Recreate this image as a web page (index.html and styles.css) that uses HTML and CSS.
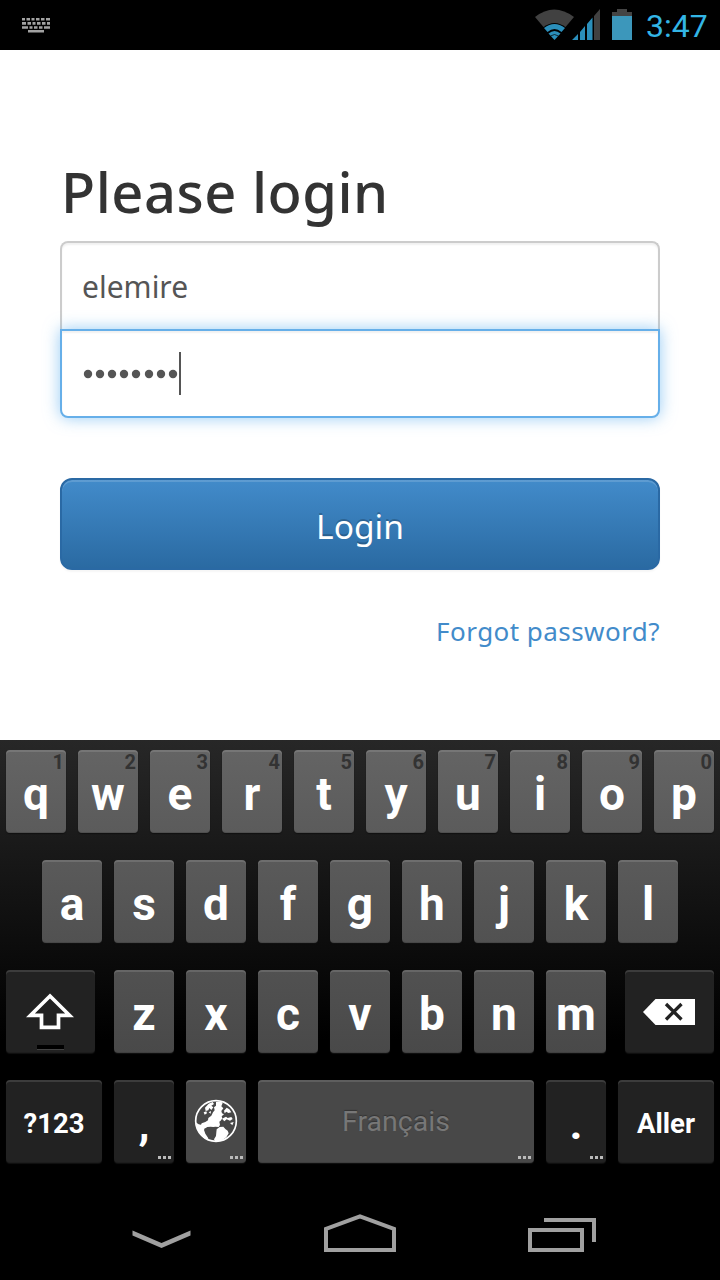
FILE: index.html
```html
<!DOCTYPE html>
<html lang="en">
<head>
<meta charset="utf-8">
<title>Please login</title>
<link rel="stylesheet" href="styles.css">
</head>
<body>
<header class="status">
  <svg class="ime" width="30" height="18" viewBox="0 0 30 18" fill="none" stroke="#a2a2a2" stroke-width="2.6">
    <path d="M0 2.2H3M4.5 2.2H8M9.500 2.2H12.500M14 2.2H17.500M19 2.2H22.500M24 2.2H28M0 6.400H4M5.500 6.400H9M10.500 6.400H13.500M15 6.400H18.500M20 6.400H23.500M25 6.400H28M0 10.500H6M7.500 10.500H10.500M12 10.500H15.500M17 10.500H20.500M22 10.500H28M6 14.300H22"/>
  </svg>
  <div class="indicators">
    <svg width="66" height="32" viewBox="0 0 66 32">
      <path fill="#414141" d="M0 8Q19-7 39 8L19.500 31Z"/>
      <path fill="#000" d="M8 18.500Q19.500 9.500 31 18.500L19.500 32Z"/>
      <path fill="#2b8fbb" d="M9 19Q19.500 11 30 19L26.500 23Q19.500 17 12.500 23Z"/>
      <path fill="#2b8fbb" d="M13.500 24.500Q19.500 19.500 25.500 24.500L19.500 31Z"/>
      <path stroke="#000" fill="none" stroke-width=".7" d="M15.500 27Q19.500 24 23.500 27"/>
      <path fill="#2b8fbb" d="M37 31L43 25V31ZM45 31V23L50 17V31ZM52 31V15L57.500 8.500V31Z"/>
      <path fill="#414141" d="M59 31V7L65 0V31Z"/>
    </svg>
    <svg class="battery" width="20" height="32" viewBox="0 0 20 32">
      <path fill="#444" d="M0 3H5V0H15V3H20V8H0Z"/>
      <path fill="#3c97bb" d="M0 7H20V31H0Z"/>
    </svg>
    <span class="clock">3:47</span>
  </div>
</header>

<main class="page">
  <form class="login">
    <h1 class="title">Please login</h1>
    <div class="field field-user"><span class="value">elemire</span></div>
    <div class="field field-pass">
      <svg class="dots" width="97" height="10" viewBox="-1 0 97 10" fill="#555">
        <circle cx="5" cy="5" r="4.200"/><circle cx="17" cy="5" r="4.200"/><circle cx="29" cy="5" r="4.200"/><circle cx="41" cy="5" r="4.200"/><circle cx="53" cy="5" r="4.200"/><circle cx="66" cy="5" r="4.200"/><circle cx="78" cy="5" r="4.200"/><circle cx="90" cy="5" r="4.200"/>
      </svg>
      <span class="caret"></span>
    </div>
    <div class="submit">Login</div>
    <div class="forgot">Forgot password?</div>
  </form>
</main>

<section class="keyboard">
  <div class="row row-1">
    <div class="key">q<sup class="hint">1</sup></div><div class="key">w<sup class="hint">2</sup></div><div class="key">e<sup class="hint">3</sup></div><div class="key">r<sup class="hint">4</sup></div><div class="key">t<sup class="hint">5</sup></div><div class="key">y<sup class="hint">6</sup></div><div class="key">u<sup class="hint">7</sup></div><div class="key">i<sup class="hint">8</sup></div><div class="key">o<sup class="hint">9</sup></div><div class="key">p<sup class="hint">0</sup></div>
  </div>
  <div class="row row-2">
    <div class="key">a</div><div class="key">s</div><div class="key">d</div><div class="key">f</div><div class="key">g</div><div class="key">h</div><div class="key">j</div><div class="key">k</div><div class="key">l</div>
  </div>
  <div class="row row-3">
    <div class="key dark shift">
      <svg width="89" height="83" viewBox="0 0 89 83">
        <path d="M44 26L63.500 45.300H52.500V57.300H35.500V45.300H24.500Z" fill="none" stroke="#fff" stroke-width="3.700"/>
        <path d="M31 75H58V79H31Z" fill="#000"/><path d="M31 79.500H58" stroke="#444"/>
      </svg>
    </div>
    <div class="key">z</div><div class="key">x</div><div class="key">c</div><div class="key">v</div><div class="key">b</div><div class="key">n</div><div class="key">m</div>
    <div class="key dark delete">
      <svg width="89" height="83" viewBox="0 0 89 83">
        <path d="M18 42L30.500 29H70V55H30.500Z" fill="#fff"/>
        <path d="M41 34L56.500 49.500M56.500 34L41 49.500" stroke="#222" stroke-width="3.300"/>
      </svg>
    </div>
  </div>
  <div class="row row-4">
    <div class="key dark label symbols">?123</div>
    <div class="key dark punct">,<span class="more"></span></div>
    <div class="key globe">
      <svg width="44" height="44" viewBox="0 0 132 132">
        <circle cx="66" cy="66" r="61" fill="none" stroke="#fff" stroke-width="5"/>
        <path fill="#fff" d="M5 70L14 76L24 78L34 84L30 93L34 104L42 116L44 124L28 116L12 96Z"/>
        <path fill="#fff" d="M20 80L23 73L34 69L42 64L43 57L52 50L57 40L62 34L60 25L66 20L66 9L80 7L86 12L82 22L88 28L82 36L84 43L90 46L83 52L85 58L80 65L76 68L78 78L74 84L64 83L58 84L50 83L40 84L34 88Z"/>
        <path fill="#fff" d="M68 91L77 84L88 83L94 90L101 95L104 103L97 115L82 125L64 128L60 121L66 111L67 100Z"/>
        <path fill="#fff" d="M33 26L44 14L56 9L60 15L52 20L58 25L52 33L46 27L43 34L35 36ZM29 40L37 37L39 43L32 47ZM90 35L98 26L106 31L112 40L103 42L97 38L92 43ZM84 59L96 53L101 57L112 54L116 60L108 65L98 61L91 67ZM108 72L119 69L115 79ZM44 40L51 36L50 44Z"/>
      </svg>
      <span class="more"></span>
    </div>
    <div class="key space">Français<span class="more"></span></div>
    <div class="key dark punct">.<span class="more"></span></div>
    <div class="key dark label go">Aller</div>
  </div>
</section>

<nav class="navbar">
  <svg width="60" height="40" viewBox="0 0 60 40" fill="#a0a0a0"><path d="M.5 18.500L29.500 31L58.500 18.500V23.500L29.500 36L.5 23.500Z"/></svg>
  <svg width="72" height="40" viewBox="0 0 72 40" fill="none" stroke="#a0a0a0" stroke-width="4"><path d="M2 38V16.800L36 4.300L70 16.800V38Z"/></svg>
  <svg width="68" height="40" viewBox="0 0 68 40" fill="none" stroke="#a0a0a0" stroke-width="4"><path d="M2 18H54V38H2ZM16 8H66V30"/></svg>
</nav>
</body>
</html>
```
FILE: styles.css
```css
* { box-sizing: border-box; }
body {
  margin: 0;
  width: 720px;
  height: 1280px;
  overflow: hidden;
  background: #000;
  font-family: "Noto Sans", sans-serif;
}
svg { display: block; }

.status {
  display: flex;
  justify-content: space-between;
  height: 50px;
  padding: 9px 12px 0 22px;
}
.ime { margin-top: 8px; }
.indicators { display: flex; }
.battery { margin-left: 11px; }
.clock {
  width: 76px;
  padding-left: 14px;
  color: #33b5e5;
  font: 32px/34px Roboto, sans-serif;
  white-space: nowrap;
}

.page { height: 690px; padding: 101px 60px 0; background: #fff; }
.login { display: flex; flex-direction: column; }
.title {
  height: 90px;
  margin: 0;
  padding-left: 1px;
  color: #333;
  font-size: 56px;
  font-weight: 500;
  letter-spacing: .5px;
  line-height: 80px;
  white-space: nowrap;
}
.field {
  display: flex;
  align-items: center;
  padding: 0 20px;
  background: #fff;
  color: #555;
}
.field-user {
  height: 88px;
  border: 2px solid #ccc;
  border-bottom: 0;
  border-radius: 8px 8px 0 0;
  box-shadow: inset 0 2px 2px rgba(0, 0, 0, .06);
  font-size: 30px;
}
.field-pass {
  height: 89px;
  border: 2px solid #66afe9;
  border-radius: 0 0 8px 8px;
  box-shadow: inset 0 2px 2px rgba(0, 0, 0, .06), 0 0 16px rgba(82, 168, 236, .6);
}
.caret { width: 2px; height: 43px; background: #555; }
.submit {
  height: 92px;
  margin-top: 60px;
  border: 2px solid #2a69a4;
  border-radius: 12px;
  background: linear-gradient(#428bca, #2a6aa2);
  box-shadow: inset 0 2px 0 rgba(255, 255, 255, .15), 0 2px 2px rgba(0, 0, 0, .04);
  color: #fff;
  font-size: 33.5px;
  line-height: 93px;
  text-align: center;
  text-shadow: 0 -2px 0 rgba(0, 0, 0, .2);
}
.forgot {
  margin-top: 41px;
  color: #428bca;
  font-size: 26px;
  letter-spacing: .45px;
  line-height: 40px;
  text-align: right;
}

.keyboard {
  display: flex;
  flex-direction: column;
  gap: 27px;
  height: 440px;
  padding: 10px 6px 0;
  background: linear-gradient(#272727, #000 300px);
  font-family: Roboto, sans-serif;
  font-weight: 700;
}
.row { display: flex; justify-content: space-between; height: 83px; }
.row-2 { padding: 0 36px; }
.key {
  position: relative;
  display: flex;
  align-items: center;
  justify-content: center;
  width: 60px;
  padding-top: 4px;
  border-radius: 4px;
  background: linear-gradient(#646464, #5b5b5b);
  box-shadow: inset 0 2px 0 rgba(255, 255, 255, .12), inset 0 -1px 0 rgba(0, 0, 0, .12), 0 1px 1px #111;
  color: #fff;
  font-size: 46px;
}
.row-2 .key { background: linear-gradient(#5a5a5a, #515151); }
.row-3 .key { background: linear-gradient(#515151, #494949); }
.row-4 .key { background: #484848; }
.row .dark { background: #222; }
.shift { margin-right: 7px; }
.delete { margin-left: 7px; }
.shift, .delete { width: 89px; padding-top: 0; }
.symbols, .go { width: 96px; }
.label { font-size: 27.5px; }
.punct { font-size: 45px; }
.globe { padding: 0 0 2px; }
.space {
  width: 276px;
  padding-top: 0;
  color: #777;
  font-size: 28.5px;
  font-weight: 400;
  text-shadow: 0 -1px 1px #333;
}
.hint {
  position: absolute;
  top: 2px;
  right: 2px;
  color: #333;
  font-size: 20px;
  line-height: 21px;
}
.more {
  position: absolute;
  right: 3px;
  bottom: 4px;
  width: 13px;
  height: 3px;
  background: repeating-linear-gradient(90deg, #bbb 0 3.5px, transparent 3.5px 4.8px);
}

.navbar {
  display: flex;
  justify-content: space-between;
  height: 100px;
  padding: 32px 124px 0 132px;
}
```
